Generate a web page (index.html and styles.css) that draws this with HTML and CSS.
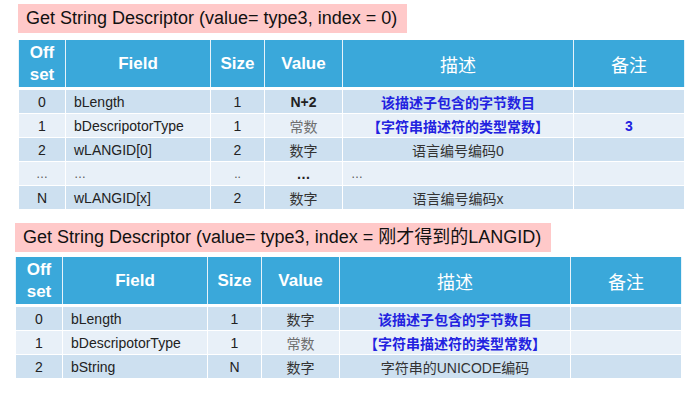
FILE: index.html
```html
<!DOCTYPE html>
<html lang="zh">
<head>
<meta charset="utf-8">
<link rel="stylesheet" href="styles.css">
</head>
<body>
<section class="block block-one">
  <div class="title">Get String Descriptor (value= type3, index = 0)</div>
  <table class="desc-table">
    <colgroup>
      <col class="c-off"><col class="c-field"><col class="c-size"><col class="c-value"><col class="c-desc"><col class="c-note">
    </colgroup>
    <thead>
      <tr>
        <th class="two-line">Off<br>set</th>
        <th>Field</th>
        <th>Size</th>
        <th>Value</th>
        <th class="cjk-head">描述</th>
        <th class="cjk-head">备注</th>
      </tr>
    </thead>
    <tbody>
      <tr class="dark">
        <td class="ctr">0</td><td class="lft">bLength</td><td class="ctr">1</td><td class="ctr bold">N+2</td><td class="ctr blue">该描述子包含的字节数目</td><td></td>
      </tr>
      <tr class="light">
        <td class="ctr">1</td><td class="lft">bDescripotorType</td><td class="ctr">1</td><td class="ctr gray">常数</td><td class="ctr blue">【字符串描述符的类型常数】</td><td class="ctr blue-num">3</td>
      </tr>
      <tr class="dark">
        <td class="ctr">2</td><td class="lft">wLANGID[0]</td><td class="ctr">2</td><td class="ctr cjk">数字</td><td class="ctr cjk">语言编号编码0</td><td></td>
      </tr>
      <tr class="light">
        <td class="ctr dots">…</td><td class="lft dots">…</td><td class="ctr dots">..</td><td class="ctr bold">…</td><td class="lft dots">…</td><td></td>
      </tr>
      <tr class="dark">
        <td class="ctr">N</td><td class="lft">wLANGID[x]</td><td class="ctr">2</td><td class="ctr cjk">数字</td><td class="ctr cjk">语言编号编码x</td><td></td>
      </tr>
    </tbody>
  </table>
</section>

<section class="block block-two">
  <div class="title">Get String Descriptor (value= type3, index = 刚才得到的LANGID)</div>
  <table class="desc-table">
    <colgroup>
      <col class="c-off"><col class="c-field"><col class="c-size"><col class="c-value"><col class="c-desc"><col class="c-note">
    </colgroup>
    <thead>
      <tr>
        <th class="two-line">Off<br>set</th>
        <th>Field</th>
        <th>Size</th>
        <th>Value</th>
        <th class="cjk-head">描述</th>
        <th class="cjk-head">备注</th>
      </tr>
    </thead>
    <tbody>
      <tr class="dark">
        <td class="ctr">0</td><td class="lft">bLength</td><td class="ctr">1</td><td class="ctr cjk">数字</td><td class="ctr blue">该描述子包含的字节数目</td><td></td>
      </tr>
      <tr class="light">
        <td class="ctr">1</td><td class="lft">bDescripotorType</td><td class="ctr">1</td><td class="ctr gray">常数</td><td class="ctr blue">【字符串描述符的类型常数】</td><td></td>
      </tr>
      <tr class="dark">
        <td class="ctr">2</td><td class="lft">bString</td><td class="ctr">N</td><td class="ctr cjk">数字</td><td class="ctr cjk">字符串的UNICODE编码</td><td></td>
      </tr>
    </tbody>
  </table>
</section>
</body>
</html>
```

FILE: styles.css
```css
html, body {
  margin: 0;
  padding: 0;
  background: #ffffff;
}

body {
  font-family: "Liberation Sans", Arial, "Noto Sans CJK SC", sans-serif;
  color: #222222;
}

.block {
  display: flex;
  flex-direction: column;
  align-items: flex-start;
}

.block-one {
  padding: 4px 0 0 18px;
  gap: 7px;
}

.block-two {
  padding: 13px 0 0 15px;
  gap: 5px;
}

.title {
  background: #ffc9c9;
  font-size: 18px;
  line-height: 29px;
  height: 29px;
  padding: 0 10px 0 8px;
  color: #111111;
  white-space: nowrap;
}

.desc-table {
  border-collapse: collapse;
  table-layout: fixed;
  width: 666px;
}

.c-off { width: 47px; }
.c-field { width: 145px; }
.c-size { width: 54px; }
.c-value { width: 78px; }
.c-desc { width: 231px; }
.c-note { width: 111px; }

.desc-table th {
  background: #3aa8da;
  color: #ffffff;
  font-weight: bold;
  font-size: 17px;
  height: 47px;
  padding: 0;
  border-left: 1px solid #e6f3fa;
  border-right: 1px solid #e6f3fa;
  border-bottom: 3px solid #ffffff;
  text-align: center;
  vertical-align: middle;
}

.desc-table th.two-line {
  line-height: 22px;
}

.desc-table th.cjk-head {
  font-weight: normal;
  font-size: 18px;
  font-family: "Liberation Sans", "Noto Sans CJK SC", sans-serif;
}

.desc-table td {
  height: 23px;
  padding: 0;
  font-size: 14px;
  border: 1px solid #ffffff;
  vertical-align: middle;
  white-space: nowrap;
  color: #222222;
}

.desc-table tr.dark td { background: #cde0f0; }
.desc-table tr.light td { background: #e8f0f8; }

.ctr { text-align: center; }
.lft { text-align: left; padding-left: 8px !important; }

.bold { font-weight: bold; }

.gray {
  color: #6e6e6e !important;
  font-family: "Noto Sans CJK SC", sans-serif;
}

.cjk {
  color: #333333 !important;
  font-family: "Liberation Sans", "Noto Sans CJK SC", sans-serif;
}

.blue {
  color: #2222e0 !important;
  font-weight: bold;
  font-family: "Noto Sans CJK SC", sans-serif;
}

.blue-num {
  color: #2222e0 !important;
  font-weight: bold;
}

.dots {
  color: #555555 !important;
  font-size: 12px !important;
}
```
